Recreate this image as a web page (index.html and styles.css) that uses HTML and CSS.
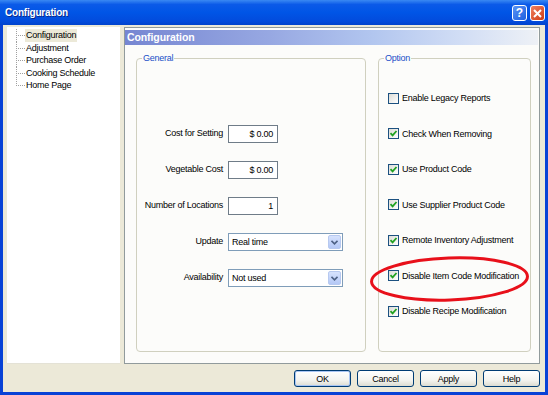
FILE: index.html
```html
<!DOCTYPE html>
<html lang="en">
<head>
  <meta charset="UTF-8" />
  <title>Configuration</title>
  <link rel="stylesheet" href="styles.css">
</head>
<body>

  <div class="window">

    <div class="titlebar">
      <span class="title">Configuration</span>
      <div class="title-btns">
        <span class="tbtn help">?</span>
        <span class="tbtn close">
          <svg width="9" height="9" viewBox="0 0 9 9"><path d="M1 1 L8 8 M8 1 L1 8" stroke="#fff" stroke-width="2" /></svg>
        </span>
      </div>
    </div>

    <div class="client">
      <div class="main">

        <ul class="tree">
          <li><span class="selected">Configuration</span></li>
          <li><span>Adjustment</span></li>
          <li><span>Purchase Order</span></li>
          <li><span>Cooking Schedule</span></li>
          <li><span>Home Page</span></li>
        </ul>

        <div class="panel">
          <div class="panel-head">Configuration</div>
          <div class="panel-body">

            <fieldset class="group general">
              <legend>General</legend>
              <div class="form">
                <label>Cost for Setting</label>
                <div class="textbox">$ 0.00</div>
                <label>Vegetable Cost</label>
                <div class="textbox">$ 0.00</div>
                <label>Number of Locations</label>
                <div class="textbox">1</div>
                <label>Update</label>
                <div class="combo"><span>Real time</span><span class="drop"><svg width="7" height="5" viewBox="0 0 7 5"><path d="M0.5 0.8 L3.5 3.8 L6.5 0.8" fill="none" stroke="#4d6185" stroke-width="1.6" /></svg></span></div>
                <label>Availability</label>
                <div class="combo"><span>Not used</span><span class="drop"><svg width="7" height="5" viewBox="0 0 7 5"><path d="M0.5 0.8 L3.5 3.8 L6.5 0.8" fill="none" stroke="#4d6185" stroke-width="1.6" /></svg></span></div>
              </div>
            </fieldset>

            <fieldset class="group option">
              <legend>Option</legend>
              <div class="checks">
                <div class="check"><span class="box"></span>Enable Legacy Reports</div>
                <div class="check"><span class="box on"></span>Check When Removing</div>
                <div class="check"><span class="box on"></span>Use Product Code</div>
                <div class="check"><span class="box on"></span>Use Supplier Product Code</div>
                <div class="check"><span class="box on"></span>Remote Inventory Adjustment</div>
                <div class="check"><span class="box on"></span>Disable Item Code Modification</div>
                <div class="check"><span class="box on"></span>Disable Recipe Modification</div>
              </div>
            </fieldset>

          </div>
        </div>
      </div>

      <div class="buttons">
        <button class="btn default">OK</button>
        <button class="btn">Cancel</button>
        <button class="btn">Apply</button>
        <button class="btn">Help</button>
      </div>
    </div>

    <!-- red marker round the item code option -->
    <svg class="marker" width="170" height="54" viewBox="0 0 170 54">
      <ellipse cx="83.5" cy="26" rx="78" ry="21" fill="none" stroke="#e8101a" stroke-width="3" transform="rotate(-2 83.5 26)" />
    </svg>
  </div>

</body>
</html>
```

FILE: styles.css
```css
body {
  margin: 0;
  font-family: 'Liberation Sans', Arial, sans-serif;
  font-size: 9px;
  letter-spacing: -0.25px;
  color: #000;
}

.window {
  position: relative;
  width: 548px;
  height: 395px;
  display: flex;
  flex-direction: column;
  background-color: #0842d6;
}

.titlebar {
  height: 25px;
  display: flex;
  align-items: center;
  justify-content: space-between;
  padding: 0 3px 0 5px;
  background: linear-gradient(#3a89f3 0, #0b5ae8 18%, #0055e6 50%, #024bdc 85%, #0143cc 100%);
}

.title {
  color: #fff;
  font-weight: bold;
  font-size: 10px;
  letter-spacing: -0.2px;
  text-shadow: 1px 1px 0 #0a2a8a;
}

.title-btns {
  display: flex;
  gap: 3px;
  margin-top: 1px;
}

.tbtn {
  width: 13px;
  height: 14px;
  border: 1px solid #fff;
  border-radius: 3px;
  display: flex;
  align-items: center;
  justify-content: center;
  color: #fff;
  font-weight: bold;
  font-size: 12px;
  letter-spacing: 0;
}

.help {
  background: linear-gradient(135deg, #5a94f5, #1c5fe0);
}

.close {
  background: linear-gradient(135deg, #ef8060, #d03c14);
}

.client {
  flex: 1;
  margin: 0 3px 3px 3px;
  background-color: #ece9d8;
  padding: 2px 5px 0 4px;
  display: flex;
  flex-direction: column;
}

.main {
  height: 337px;
  display: flex;
  gap: 4px;
}

/* tree */

.tree {
  width: 104px;
  margin: 0;
  padding: 2px 0 0 9px;
  list-style: none;
  background-color: #fff;
  border-bottom: 1px solid #e4e2d6;
}

.tree li {
  display: flex;
  height: 12.5px;
  line-height: 12px;
  white-space: nowrap;
}

.tree li::before {
  content: '';
  width: 9px;
  flex: none;
  background:
    repeating-linear-gradient(to right, #a0a0a0 0 1px, transparent 1px 2px) 0 6px / 9px 1px no-repeat,
    repeating-linear-gradient(#a0a0a0 0 1px, transparent 1px 2px) 0 0 / 1px 100% no-repeat;
}

.tree li:last-child::before {
  background:
    repeating-linear-gradient(to right, #a0a0a0 0 1px, transparent 1px 2px) 0 6px / 9px 1px no-repeat,
    repeating-linear-gradient(#a0a0a0 0 1px, transparent 1px 2px) 0 0 / 1px 7px no-repeat;
}

.tree span {
  padding: 0 1px;
}

.tree .selected {
  background-color: #ece9d8;
}

/* panel */

.panel {
  flex: 1;
  border: 1px solid #919b9c;
  background-color: #fcfcfa;
  display: flex;
  flex-direction: column;
}

.panel-head {
  margin: 2px 1px 0 0;
  height: 15px;
  padding-left: 2px;
  color: #fff;
  font-weight: bold;
  font-size: 10.5px;
  letter-spacing: -0.1px;
  line-height: 14px;
  background: linear-gradient(to right, #7686d2 0, #97a8e2 35%, #b2c6ef 60%, #d2def5 82%, #eef1f6 100%);
}

.panel-body {
  flex: 1;
  display: flex;
  gap: 12px;
  padding: 7px 8px 11px 11px;
}

.group {
  margin: 0;
  padding: 0;
  min-width: 0;
  border: 1px solid #d0d0bf;
  border-radius: 4px;
}

.group legend {
  color: #1a4fc8;
  padding: 0 1px;
  margin-left: 5px;
  line-height: 12px;
}

.general {
  width: 228px;
  flex: none;
}

.option {
  flex: 1;
}

.form {
  display: grid;
  grid-template-columns: 86px auto;
  column-gap: 5px;
  row-gap: 18px;
  justify-items: start;
  align-items: center;
  margin-top: 61px;
}

.form label {
  justify-self: end;
  white-space: nowrap;
  margin-top: -2px;
}

.textbox {
  width: 44px;
  height: 16px;
  border: 1px solid #6f7c88;
  background-color: #fff;
  text-align: right;
  padding-right: 4px;
  line-height: 16px;
  box-sizing: content-box;
}

.combo {
  height: 16px;
  border: 1px solid #7f9db9;
  background-color: #fff;
  display: flex;
  align-items: center;
  justify-content: space-between;
  padding-left: 3px;
  box-sizing: content-box;
  width: 110px;
}

.drop {
  width: 13px;
  height: 14px;
  margin-right: 1px;
  border-radius: 2px;
  background: linear-gradient(#d6e2fd, #b4c8f6);
  border: 1px solid #b7c9f0;
  box-sizing: border-box;
  display: flex;
  align-items: center;
  justify-content: center;
}

.checks {
  display: flex;
  flex-direction: column;
  gap: 21.5px;
  padding: 27px 0 0 9px;
}

.check {
  height: 14px;
  display: flex;
  align-items: center;
  gap: 3px;
  white-space: nowrap;
}

.box {
  width: 9px;
  height: 9px;
  flex: none;
  border: 1px solid #1c5180;
  background: linear-gradient(135deg, #dcdcd7, #fff);
}

.box.on {
  background:
    url("data:image/svg+xml;utf8,<svg xmlns='http://www.w3.org/2000/svg' width='9' height='9' viewBox='0 0 9 9'><path d='M1.5 4.2 L3.6 6.4 L7.5 2' fill='none' stroke='%2321a121' stroke-width='1.8'/></svg>") center no-repeat,
    linear-gradient(135deg, #dcdcd7, #fff);
}

/* buttons */

.buttons {
  display: flex;
  justify-content: flex-end;
  gap: 6px;
  margin-top: 6px;
}

.btn {
  width: 57px;
  height: 17px;
  padding: 0;
  font-family: inherit;
  font-size: 9px;
  letter-spacing: -0.25px;
  color: #000;
  border: 1px solid #003c74;
  border-radius: 3px;
  background: linear-gradient(#ffffff 0, #f4f4f0 60%, #dcdcd2 100%);
}

.btn.default {
  box-shadow: inset 0 0 0 1px #aac6f4;
}

.marker {
  position: absolute;
  left: 366px;
  top: 253px;
}
```
